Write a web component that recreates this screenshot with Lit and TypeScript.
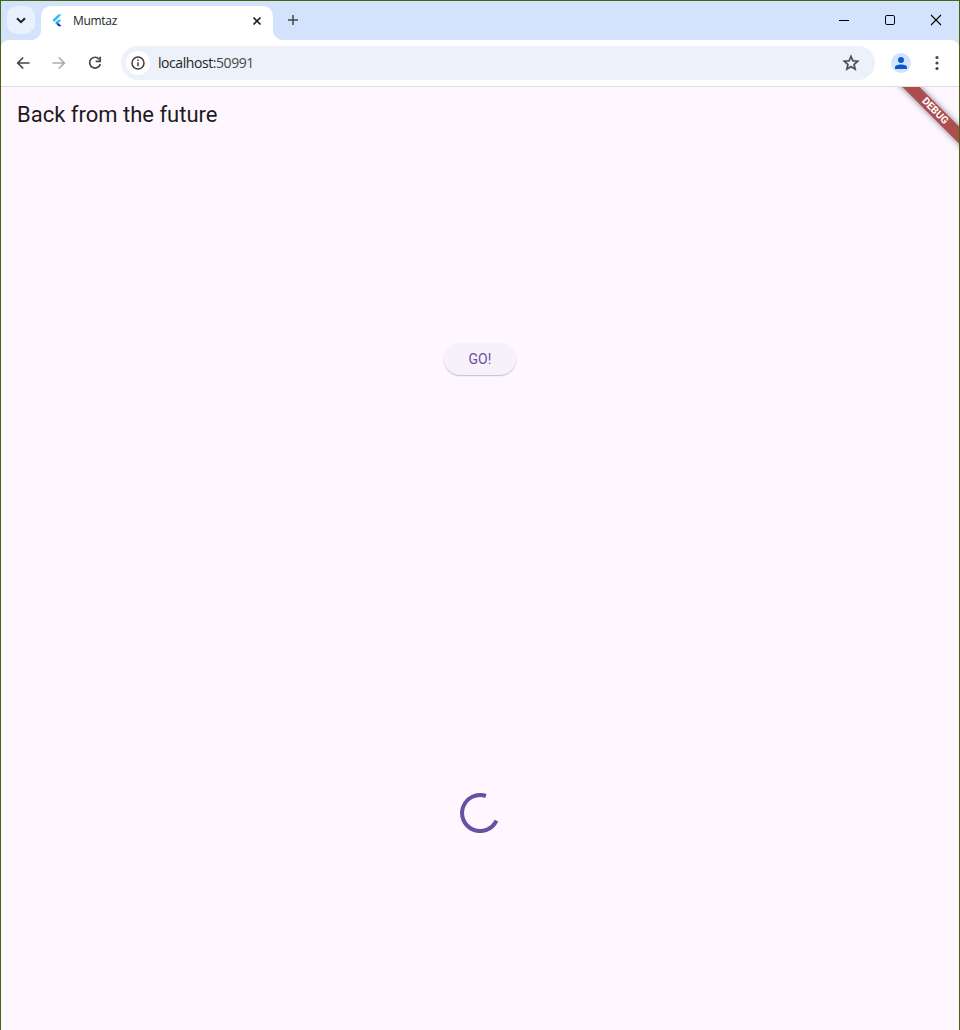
import { LitElement, html, css } from "lit";
import { customElement } from "lit/decorators.js";

@customElement("tab-strip")
class TabStrip extends LitElement {
  static styles = css`
    :host { display: flex; height: 39px; background: #d3e3fd; font-family: "Open Sans", "Noto Sans", sans-serif; }
    svg { display: block; flex: none; }
    .search { width: 28px; height: 28px; margin: 5px 0 0 6px; border-radius: 10px; background: #e9f1fe; flex: none; }
    .tab { position: relative; box-sizing: border-box; width: 232px; height: 34px; margin: 5px 0 0 6px; padding: 0 10px 5px; border-radius: 10px 10px 0 0; background: #fff; display: flex; align-items: center; }
    .foot { position: absolute; bottom: 0; width: 10px; height: 10px; }
    .foot.l { left: -10px; background: radial-gradient(circle at 0 0, #d3e3fd 9.6px, #fff 10.4px); }
    .foot.r { right: -10px; background: radial-gradient(circle at 100% 0, #d3e3fd 9.6px, #fff 10.4px); }
    .title { flex: 1; margin-left: 6px; font-size: 12px; line-height: 16px; color: #1f1f1f; letter-spacing: -0.3px; }
    .plus { margin: 12px 0 0 13px; }
    .space { flex: 1; }
    .win { width: 46px; height: 38px; }
  `;
  render() {
    return html`
      <div class="search"><svg width="28" height="28" viewBox="0 0 28 28" fill="none" stroke="#1f1f1f" stroke-width="2"><path d="M10 12.2l4 4 4-4" /></svg></div>
      <div class="tab">
        <span class="foot l"></span>
        <svg width="16" height="16" viewBox="0 0 16 16">
          <path d="M7.2 1.4h3.4L3.3 8.9 1.5 7.1z" fill="#35b9f8" />
          <path d="M7.2 6.7h3.4L7.4 10 5.7 8.3z" fill="#35b9f8" />
          <path d="M4.1 9.9l1.7-1.7 1.7 1.7-1.7 1.7z" fill="#1e90f0" />
          <path d="M5.8 11.6l1.7-1.7 3.2 3.4H7.4z" fill="#0b3fae" />
        </svg>
        <span class="title">Mumtaz</span>
        <svg width="12" height="12" viewBox="0 0 12 12" stroke="#1f1f1f" stroke-width="1.7"><path d="M2.5 2.5l7 7M9.5 2.5l-7 7" /></svg>
        <span class="foot r"></span>
      </div>
      <svg class="plus" width="14" height="14" viewBox="0 0 14 14" stroke="#474747" stroke-width="1.5"><path d="M7 2v10M2 7h10" /></svg>
      <div class="space"></div>
      <svg class="win" viewBox="0 0 46 38" stroke="#000" shape-rendering="crispEdges"><path d="M18 19.5h10" /></svg>
      <svg class="win" viewBox="0 0 46 38" fill="none" stroke="#000"><rect x="18.5" y="14.5" width="9" height="9" rx="1.3" /></svg>
      <svg class="win" viewBox="0 0 46 38" stroke="#000" stroke-width="1.1"><path d="M18 14l10 10M28 14l-10 10" /></svg>
    `;
  }
}

@customElement("nav-toolbar")
class NavToolbar extends LitElement {
  static styles = css`
    :host { display: block; height: 47px; background: #d3e3fd; font-family: "Open Sans", "Noto Sans", sans-serif; }
    .bar { box-sizing: border-box; display: flex; align-items: center; height: 47px; padding: 0 12px 0 12px; border-bottom: 1px solid #dfe1e0; border-radius: 8px 8px 0 0; background: #fff; }
    svg { display: block; flex: none; }
    .nav { width: 20px; height: 20px; margin-right: 16px; }
    .omni { box-sizing: border-box; display: flex; align-items: center; flex: 1; height: 34px; border-radius: 17px; padding: 0 14px 0 5px; background: #ecf1fa; }
    .info { width: 24px; height: 24px; border-radius: 50%; background: #fff; }
    .url { flex: 1; margin-left: 8px; font-size: 14px; line-height: 20px; color: #1f1f1f; letter-spacing: -0.43px; }
    .port { color: #474747; }
    .avatar { margin: 0 16px; }
  `;
  render() {
    return html`
      <div class="bar">
        <svg class="nav" viewBox="0 0 20 20" fill="none" stroke="#474747" stroke-width="1.7"><path d="M16.5 10H5M10.2 4.5L4.7 10l5.5 5.5" /></svg>
        <svg class="nav" viewBox="0 0 20 20" fill="none" stroke="#ababab" stroke-width="1.7"><path d="M3.5 10H15M9.8 4.5l5.5 5.5-5.5 5.5" /></svg>
        <svg class="nav" viewBox="0 0 20 20" fill="none" stroke="#474747" stroke-width="1.7"><path d="M14.2 6.2A5.4 5.4 0 1 0 15.3 11M15.2 3.8v4.5h-4.6" /></svg>
        <div class="omni">
          <div class="info"><svg width="24" height="24" viewBox="0 0 24 24" fill="none" stroke="#3c3c3c" stroke-width="1.5"><circle cx="12" cy="12" r="6" /><path d="M12 11.2v4M12 8.4v1.5" /></svg></div>
          <span class="url">localhost<span class="port">:50991</span></span>
          <svg width="20" height="20" viewBox="0 0 24 24" fill="#474747" stroke="#474747" stroke-width="0.4"><path d="M22 9.24l-7.19-.62L12 2 9.19 8.63 2 9.24l5.46 4.73L5.82 21 12 17.27 18.18 21l-1.63-7.03L22 9.24zM12 15.4l-3.76 2.27 1-4.28-3.32-2.88 4.38-.38L12 6.1l1.71 4.04 4.38.38-3.32 2.88 1 4.28L12 15.4z" /></svg>
        </div>
        <svg class="avatar" width="20" height="20" viewBox="0 0 20 20"><circle cx="10" cy="10" r="10" fill="#d3e3fd" /><g fill="#0b57d0"><circle cx="10" cy="7" r="3" /><path d="M4 16v-1.6C4 12.4 7 11.5 10 11.5s6 .9 6 2.9V16z" /></g></svg>
        <svg width="20" height="20" viewBox="0 0 20 20" fill="#474747"><circle cx="10" cy="4.5" r="1.6" /><circle cx="10" cy="10" r="1.6" /><circle cx="10" cy="15.5" r="1.6" /></svg>
      </div>
    `;
  }
}

@customElement("flutter-page")
class FlutterPage extends LitElement {
  static styles = css`
    :host { position: relative; display: flex; flex-direction: column; flex: 1; overflow: hidden; background: #fef7ff; font-family: Roboto, sans-serif; }
    h1 { margin: 0; height: 56px; padding-left: 16px; font-size: 22px; font-weight: 400; line-height: 55px; color: #1d1b20; }
    main { flex: 1; display: flex; flex-direction: column; align-items: center; padding-top: 200px; }
    button { width: 72px; height: 32px; padding: 0; border: 0; border-radius: 16px; background: #f7f2fa; box-shadow: 0 1px 2px rgba(0, 0, 0, 0.1), 0 1px 1px rgba(0, 0, 0, 0.14); font: 400 14px/32px Roboto, sans-serif; letter-spacing: 0.1px; color: #6750a4; }
    .spinner { display: block; margin-top: 418px; }
    .corner { position: absolute; top: 0; right: 0; width: 80px; height: 80px; overflow: hidden; }
    .ribbon { position: absolute; left: 5.96px; top: 18.04px; width: 100px; height: 12px; transform: rotate(45deg); background: #ac4d50; box-shadow: 0 0 6px rgba(0, 0, 0, 0.5); text-align: center; font-size: 10.2px; font-weight: 700; line-height: 12px; color: #fff; }
  `;
  render() {
    return html`
      <h1>Back from the future</h1>
      <main>
        <button>GO!</button>
        <svg class="spinner" width="40" height="40" viewBox="0 0 40 40" fill="none" stroke="#6750a4" stroke-width="4"><path d="M25.9 3A18 18 0 1 0 36.4 27.6" /></svg>
      </main>
      <div class="corner"><div class="ribbon">DEBUG</div></div>
    `;
  }
}

@customElement("app-root")
class AppRoot extends LitElement {
  static styles = css`
    :host { box-sizing: border-box; display: flex; flex-direction: column; height: 1030px; border: 1px solid #46640f; border-bottom: 0; overflow: hidden; }
  `;
  render() {
    return html`<tab-strip></tab-strip><nav-toolbar></nav-toolbar><flutter-page></flutter-page>`;
  }
}
